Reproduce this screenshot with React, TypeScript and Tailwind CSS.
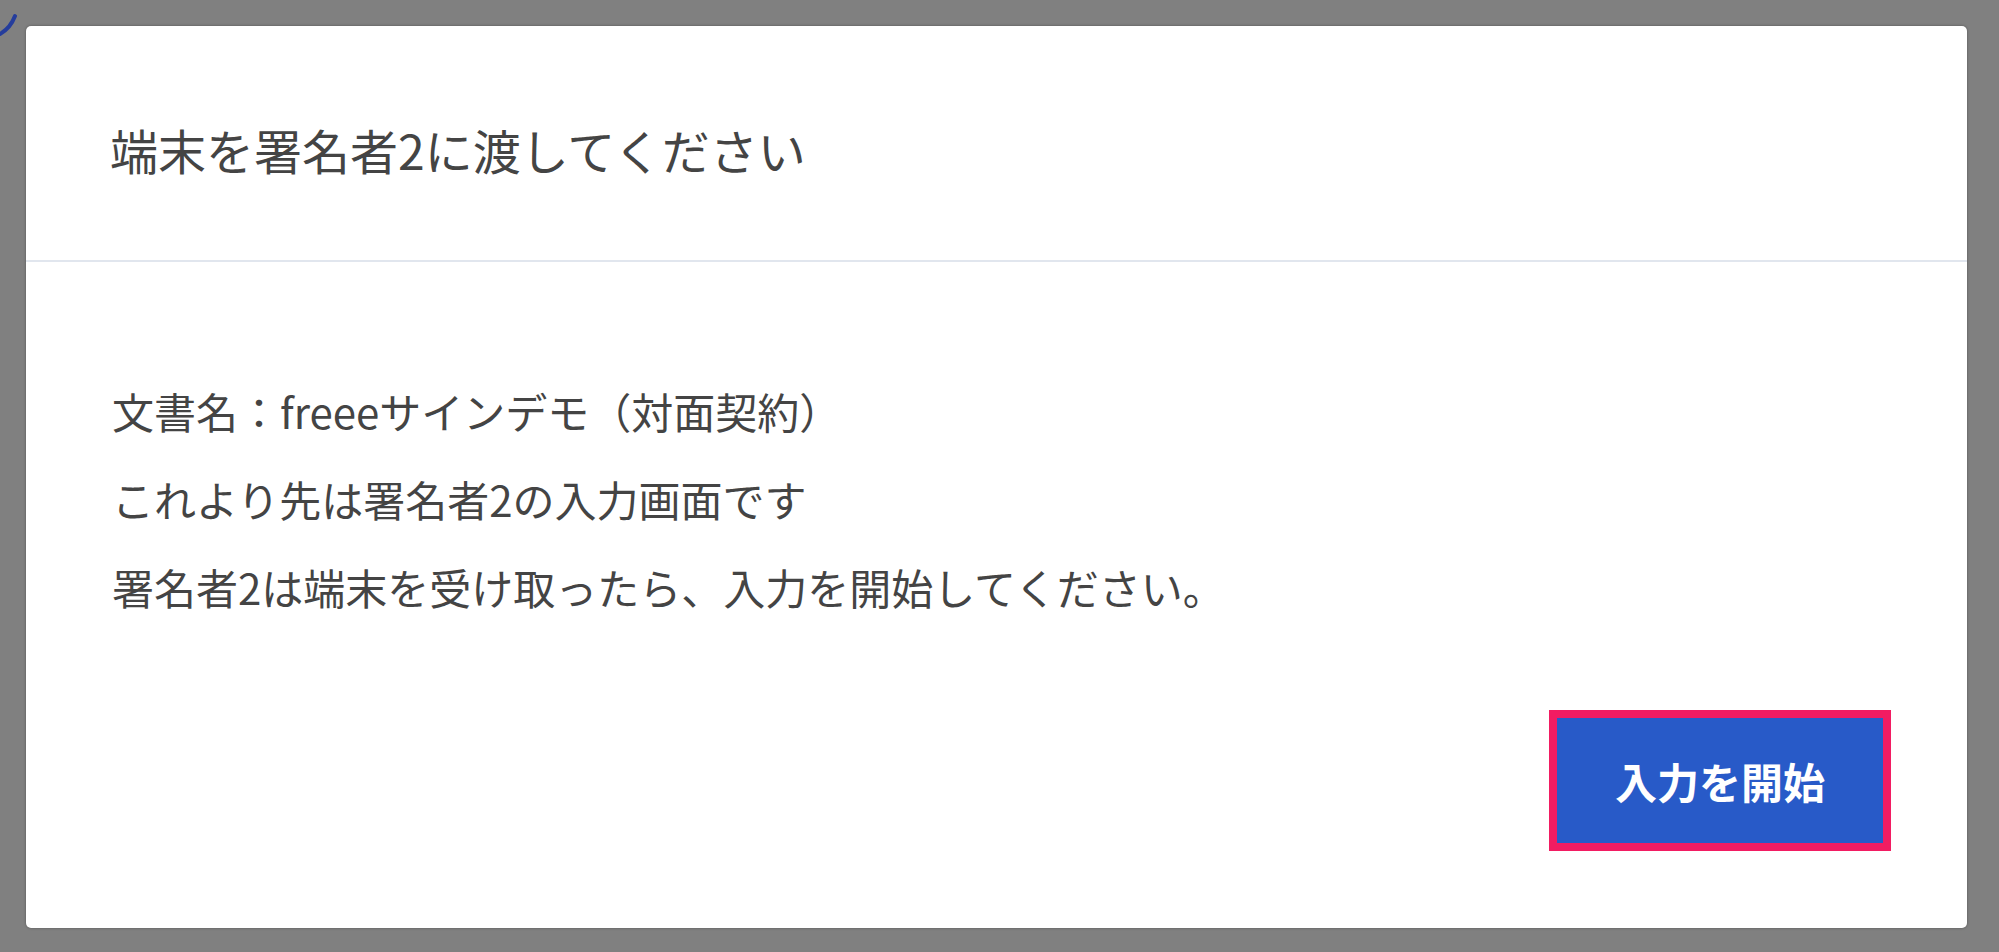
import React from "react";

export default function App() {
  return (
    <main
      className="relative h-[952px] w-full overflow-hidden bg-[#808080] pt-[26px] pl-[26px] pr-[32px]"
      style={{ fontFamily: '"Noto Sans CJK JP", "Noto Sans", sans-serif' }}
    >
      {/* bit of the page behind the overlay */}
      <svg className="absolute left-0 top-0" width="20" height="40" viewBox="0 0 20 40">
        <path d="M15 16 C12 24 7 30 0 34" fill="none" stroke="#253d9c" strokeWidth="4" strokeLinecap="round" />
      </svg>

      <div className="flex h-[902px] flex-col rounded-[5px] bg-white shadow-[0_0_3px_rgba(0,0,0,0.35)]">
        <div className="border-b-2 border-[#e1e6ee] pl-[84px] pt-[87px] pb-[75px]">
          <h2 className="text-[48px] leading-[72px] text-[#444]">端末を署名者2に渡してください</h2>
        </div>

        <div className="flex flex-1 flex-col justify-between pl-[86px] pr-[76px] pt-[117px] pb-[77px]">
          <div className="flex flex-col gap-[24px] text-[42px] leading-[64px] text-[#444]">
            <p>文書名：freeeサインデモ（対面契約）</p>
            <p>これより先は署名者2の入力画面です</p>
            <p>署名者2は端末を受け取ったら、入力を開始してください。</p>
          </div>

          <div className="flex justify-end">
            <button className="flex h-[141px] w-[342px] items-center justify-center border-[8px] border-[#f21c62] bg-[#285ac8] text-[42px] font-bold text-white">
              入力を開始
            </button>
          </div>
        </div>
      </div>
    </main>
  );
}
